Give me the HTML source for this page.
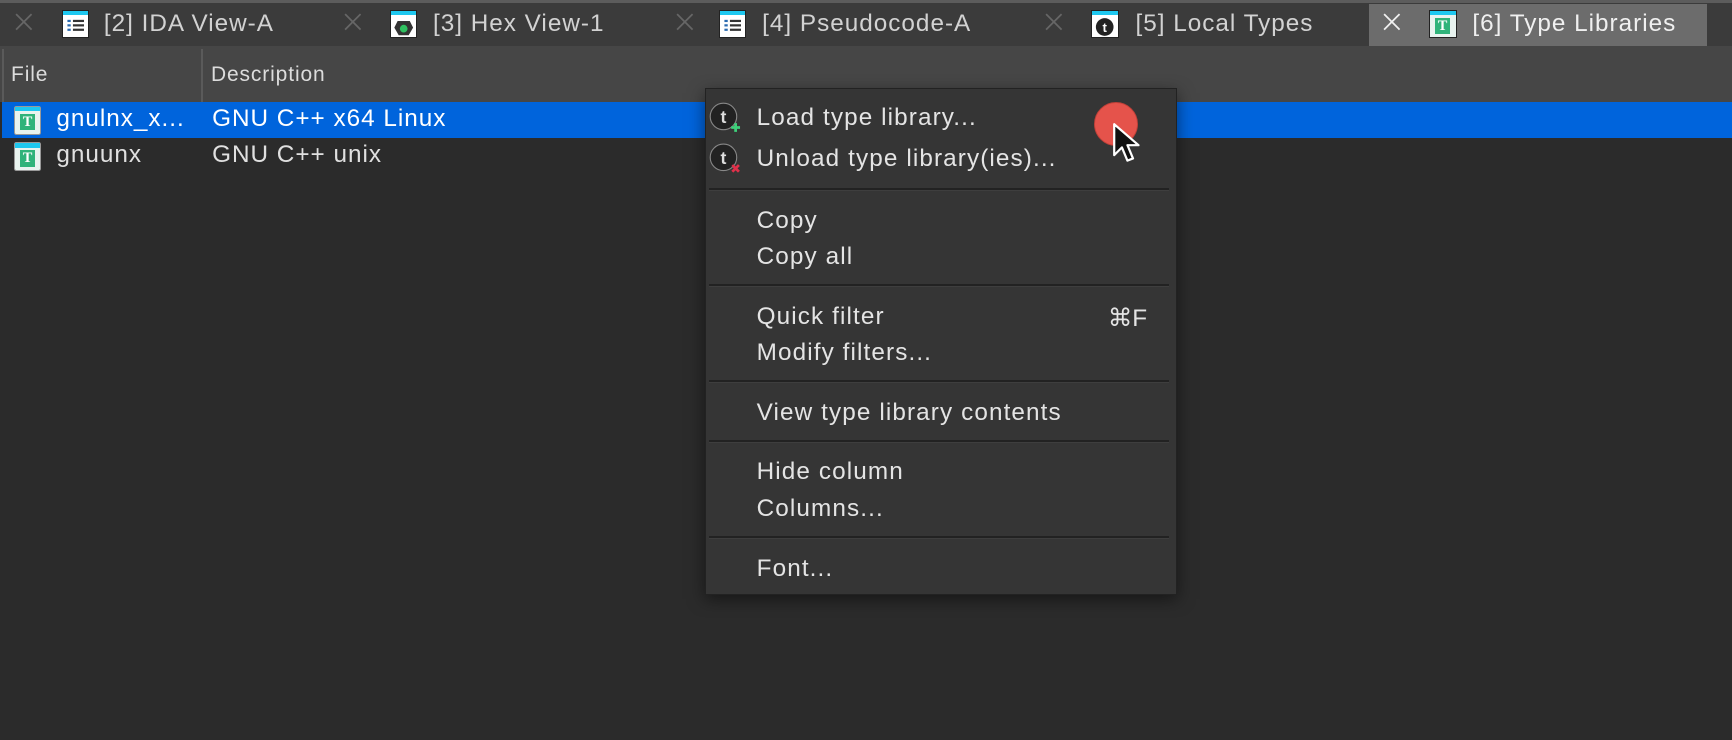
<!DOCTYPE html>
<html><head><meta charset="utf-8"><style>
html,body{margin:0;padding:0;background:#2b2b2b;width:1732px;height:740px;overflow:hidden}
#w{zoom:1.1046;position:relative;width:1568px;height:670px;font-family:"Liberation Sans",sans-serif;background:#2b2b2b}
.a{position:absolute;white-space:nowrap}
.tab{font-size:22px;letter-spacing:0.9px;color:#d2d2d2;top:9px}
.x{top:12px}
.ic{position:absolute;width:23px;height:24px;background:#fff;border:1px solid #222;top:9px}
.ic:before{content:"";position:absolute;left:0;right:0;top:0;height:4px;background:#1ec8f0}
.mi{position:absolute;left:685px;font-size:22px;letter-spacing:1px;color:#e4e4e4}
.sep{position:absolute;left:642px;width:416px;height:2px;background:#222;border-bottom:1px solid #3e3e3e}
.t{position:absolute;width:22px;height:24px;border-radius:2px;background:#e8f3ef;border:1px solid #999}
.t:before{content:"";position:absolute;left:0;right:0;top:0;height:4px;background:#1ec8f0}
.t span{position:absolute;left:4px;top:6px;width:14px;height:15px;background:#2fb37a;color:#fff;font:bold 13px "Liberation Serif",serif;text-align:center;line-height:15px}
.row{font-size:22px;letter-spacing:0.9px}
</style></head><body><div id="w">
<div class="a" style="left:0;top:0;width:1568px;height:3px;background:#5c5c5c"></div>
<div class="a" style="left:0;top:3px;width:1568px;height:39px;background:#3b3b3b"></div>
<div class="a" style="left:1239px;top:4px;width:306px;height:38px;background:#6c6c6c"></div>
<svg class="a x" style="left:14px" width="16" height="16"><path d="M1 1L15 15M15 1L1 15" stroke="#666" stroke-width="1.6"/></svg>
<div class="ic" style="left:56px"><svg width="23" height="24" style="position:absolute;left:0;top:0"><g fill="#2a6ab0"><rect x="4" y="8" width="3" height="2"/><rect x="4" y="12" width="3" height="2"/><rect x="4" y="16" width="3" height="2"/></g><g fill="#333"><rect x="9" y="8" width="10" height="2"/><rect x="9" y="12" width="10" height="2"/><rect x="9" y="16" width="10" height="2"/></g></svg></div>
<div class="a tab" style="left:94px">[2] IDA View-A</div>
<svg class="a x" style="left:311px" width="16" height="16"><path d="M1 1L15 15M15 1L1 15" stroke="#666" stroke-width="1.6"/></svg>
<div class="ic" style="left:353px"><svg width="23" height="24" style="position:absolute;left:0;top:0"><path d="M6 9 L17 9 L20 15 L16 22 L7 22 L3 15Z" fill="#333"/><circle cx="11.5" cy="16" r="3.5" fill="#2fc060"/></svg></div>
<div class="a tab" style="left:392px">[3] Hex View-1</div>
<svg class="a x" style="left:612px" width="16" height="16"><path d="M1 1L15 15M15 1L1 15" stroke="#666" stroke-width="1.6"/></svg>
<div class="ic" style="left:651px"><svg width="23" height="24" style="position:absolute;left:0;top:0"><g fill="#2a6ab0"><rect x="4" y="8" width="3" height="2"/><rect x="4" y="12" width="3" height="2"/><rect x="4" y="16" width="3" height="2"/></g><g fill="#333"><rect x="9" y="8" width="10" height="2"/><rect x="9" y="12" width="10" height="2"/><rect x="9" y="16" width="10" height="2"/></g></svg></div>
<div class="a tab" style="left:690px">[4] Pseudocode-A</div>
<svg class="a x" style="left:946px" width="16" height="16"><path d="M1 1L15 15M15 1L1 15" stroke="#666" stroke-width="1.6"/></svg>
<div class="ic" style="left:988px"><svg width="23" height="24" style="position:absolute;left:0;top:0"><circle cx="11.5" cy="14.5" r="8" fill="#222"/><text x="11.5" y="19" font-size="12" font-weight="bold" fill="#fff" text-anchor="middle" font-family="Liberation Sans">t</text></svg></div>
<div class="a tab" style="left:1028px">[5] Local Types</div>
<svg class="a x" style="left:1252px" width="16" height="16"><path d="M1 1L15 15M15 1L1 15" stroke="#f0f0f0" stroke-width="1.6"/></svg>
<div class="ic" style="left:1294px;background:#e8f3ef"><span style="position:absolute;left:4px;top:6px;width:14px;height:15px;background:#2fb37a;color:#fff;font:bold 13px 'Liberation Serif',serif;text-align:center;line-height:15px">T</span></div>
<div class="a tab" style="left:1333px;color:#f0f0f0">[6] Type Libraries</div>

<div class="a" style="left:0;top:42px;width:1568px;height:50px;background:#464646"></div>
<div class="a" style="left:2px;top:44px;width:2px;height:48px;background:#5a5a5a"></div>
<div class="a" style="left:182px;top:44px;width:2px;height:48px;background:#5a5a5a"></div>
<div class="a" style="left:10px;top:57px;font-size:19px;letter-spacing:0.8px;color:#dcdcdc">File</div>
<div class="a" style="left:191px;top:57px;font-size:19px;letter-spacing:0.8px;color:#dcdcdc">Description</div>

<div class="a" style="left:2px;top:92px;width:1566px;height:33px;background:#0064dc"></div>
<div class="t" style="left:13px;top:96px"><span>T</span></div>
<div class="a row" style="left:51px;top:95px;color:#fff">gnulnx_x...</div>
<div class="a row" style="left:192px;top:95px;color:#fff">GNU C++ x64 Linux</div>
<div class="t" style="left:13px;top:129px"><span>T</span></div>
<div class="a row" style="left:51px;top:128px;color:#e0e0e0">gnuunx</div>
<div class="a row" style="left:192px;top:128px;color:#e0e0e0">GNU C++ unix</div>

<div class="a" style="left:638px;top:80px;width:426px;height:457px;background:#353535;border:1px solid #222;box-shadow:0 4px 14px rgba(0,0,0,.5)"></div>
<svg class="a" style="left:641px;top:91px" width="32" height="70"><circle cx="14" cy="14" r="12" fill="#222" stroke="#888" stroke-width="1"/><text x="14" y="20" font-size="16" font-weight="bold" fill="#ddd" text-anchor="middle" font-family="Liberation Sans">t</text><path d="M25 20v8M21 24h8" stroke="#3ed07a" stroke-width="2.5"/>
<circle cx="14" cy="51" r="12" fill="#222" stroke="#888" stroke-width="1"/><text x="14" y="57" font-size="16" font-weight="bold" fill="#ddd" text-anchor="middle" font-family="Liberation Sans">t</text><path d="M22 58l6 6M28 58l-6 6" stroke="#e0304a" stroke-width="2.5"/></svg>
<div class="mi" style="top:94px">Load type library...</div>
<div class="mi" style="top:131px">Unload type library(ies)...</div>
<div class="sep" style="top:170px"></div>
<div class="mi" style="top:187px">Copy</div>
<div class="mi" style="top:220px">Copy all</div>
<div class="sep" style="top:257px"></div>
<div class="mi" style="top:274px">Quick filter</div>
<div class="a" style="left:1003px;top:274px;font-size:22px;color:#e4e4e4">⌘F</div>
<div class="mi" style="top:307px">Modify filters...</div>
<div class="sep" style="top:344px"></div>
<div class="mi" style="top:361px">View type library contents</div>
<div class="sep" style="top:398px"></div>
<div class="mi" style="top:415px">Hide column</div>
<div class="mi" style="top:448px">Columns...</div>
<div class="sep" style="top:485px"></div>
<div class="mi" style="top:502px">Font...</div>

<div class="a" style="left:990px;top:92px;width:40px;height:40px;border-radius:50%;background:#e5534b;border:1px solid #c04038;box-sizing:border-box"></div>
<svg class="a" style="left:1007px;top:110px" width="28" height="42"><path d="M2 2 L2 30 L9 23 L14 35 L19 33 L14 21 L24 21 Z" fill="#111" stroke="#fff" stroke-width="2" stroke-linejoin="round"/></svg>
</div></body></html>
